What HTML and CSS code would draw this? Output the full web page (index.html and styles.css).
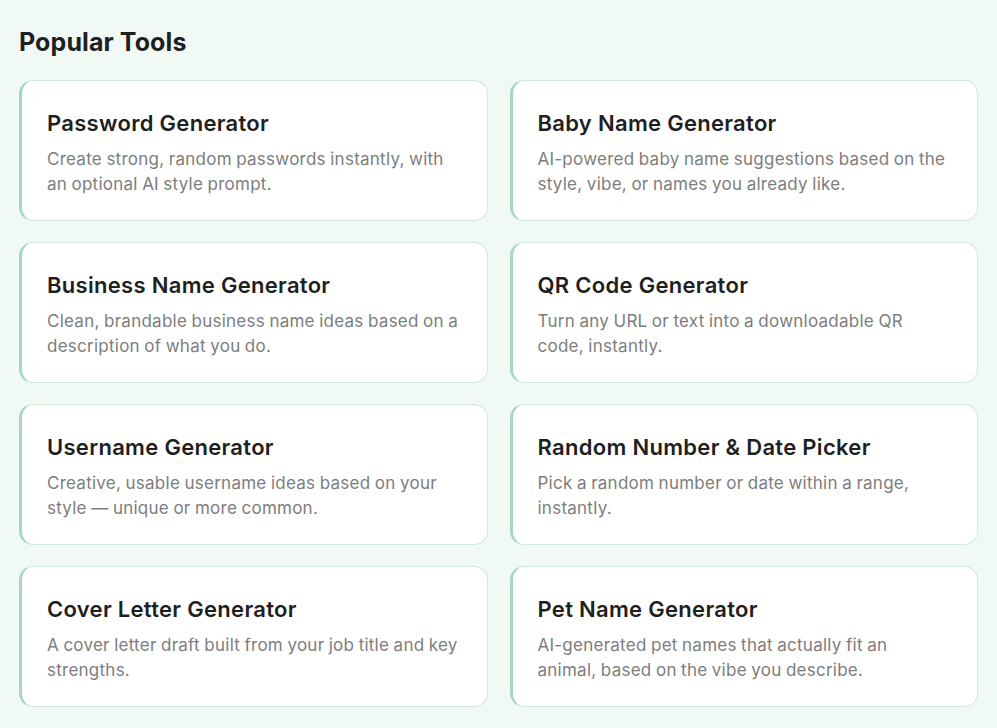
FILE: index.html
```html
<!DOCTYPE html>
<html lang="en">
<head>
<meta charset="utf-8">
<title>Popular Tools</title>
<link rel="stylesheet" href="styles.css">
</head>
<body>
<section class="tools">
  <h2 class="tools-title">Popular Tools</h2>
  <div class="tools-grid">
    <a class="tool-card" href="#">
      <h3 class="tool-name">Password Generator</h3>
      <p class="tool-desc">Create strong, random passwords instantly, with an optional AI style prompt.</p>
    </a>
    <a class="tool-card" href="#">
      <h3 class="tool-name">Baby Name Generator</h3>
      <p class="tool-desc">AI-powered baby name suggestions based on the style, vibe, or names you already like.</p>
    </a>
    <a class="tool-card" href="#">
      <h3 class="tool-name">Business Name Generator</h3>
      <p class="tool-desc">Clean, brandable business name ideas based on a description of what you do.</p>
    </a>
    <a class="tool-card" href="#">
      <h3 class="tool-name">QR Code Generator</h3>
      <p class="tool-desc">Turn any URL or text into a downloadable QR code, instantly.</p>
    </a>
    <a class="tool-card" href="#">
      <h3 class="tool-name">Username Generator</h3>
      <p class="tool-desc">Creative, usable username ideas based on your style — unique or more common.</p>
    </a>
    <a class="tool-card" href="#">
      <h3 class="tool-name">Random Number &amp; Date Picker</h3>
      <p class="tool-desc">Pick a random number or date within a range, instantly.</p>
    </a>
    <a class="tool-card" href="#">
      <h3 class="tool-name">Cover Letter Generator</h3>
      <p class="tool-desc">A cover letter draft built from your job title and key strengths.</p>
    </a>
    <a class="tool-card" href="#">
      <h3 class="tool-name">Pet Name Generator</h3>
      <p class="tool-desc">AI-generated pet names that actually fit an animal, based on the vibe you describe.</p>
    </a>
  </div>
</section>
</body>
</html>
```
FILE: styles.css
```css
* { box-sizing: border-box; }
html, body {
  margin: 0;
  background: #f1f9f5;
}
body {
  font-family: Inter, "Noto Sans", sans-serif;
  color: #1c1c1c;
}
.tools {
  padding: 27px 19px 20px 19px;
}
.tools-title {
  margin: 0 0 22px 0;
  font-size: 25px;
  font-weight: 700;
  line-height: 31px;
  letter-spacing: 0.1px;
  color: #1f1f1f;
}
.tools-grid {
  display: grid;
  grid-template-columns: 1fr 1fr;
  column-gap: 22px;
  row-gap: 21px;
}
.tool-card {
  display: block;
  height: 141px;
  padding: 28px 28px 0 25px;
  background: #ffffff;
  border: 1px solid #cfe9dc;
  border-left: 3px solid #a6d8bd;
  border-radius: 14px;
  text-decoration: none;
}
.tool-name {
  margin: 0 0 10px 0;
  font-size: 22px;
  font-weight: 600;
  line-height: 28px;
  letter-spacing: 0.3px;
  color: #1f1f1f;
}
.tool-desc {
  margin: 0;
  font-size: 17px;
  line-height: 25px;
  letter-spacing: 0.25px;
  word-spacing: -0.6px;
  color: #7d7d7d;
}
```
